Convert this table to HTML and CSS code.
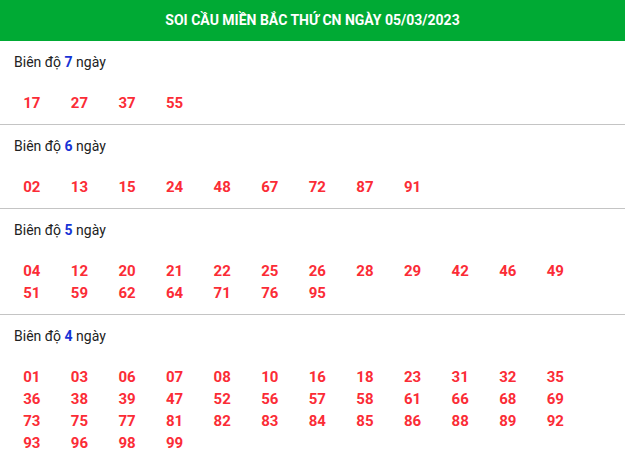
FILE: index.html
```html
<!DOCTYPE html>
<html lang="vi">
<head>
    <meta charset="UTF-8">
    <meta name="viewport" content="width=device-width, initial-scale=1.0">
    <title>Soi cầu miền Bắc</title>
    <link rel="stylesheet" href="styles.css">
</head>
<body>
    <div class="box">
        <h2 class="box-title">SOI CẦU MIỀN BẮC THỨ CN NGÀY 05/03/2023</h2>

        <div class="section">
            <div class="label">Biên độ <b>7</b> ngày</div>
            <div class="nums">
                <span>17</span><span>27</span><span>37</span><span>55</span>
            </div>
        </div>

        <div class="section">
            <div class="label">Biên độ <b>6</b> ngày</div>
            <div class="nums">
                <span>02</span><span>13</span><span>15</span><span>24</span><span>48</span><span>67</span>
                <span>72</span><span>87</span><span>91</span>
            </div>
        </div>

        <div class="section">
            <div class="label">Biên độ <b>5</b> ngày</div>
            <div class="nums">
                <span>04</span><span>12</span><span>20</span><span>21</span><span>22</span><span>25</span>
                <span>26</span><span>28</span><span>29</span><span>42</span><span>46</span><span>49</span>
                <span>51</span><span>59</span><span>62</span><span>64</span><span>71</span><span>76</span>
                <span>95</span>
            </div>
        </div>

        <div class="section">
            <div class="label">Biên độ <b>4</b> ngày</div>
            <div class="nums">
                <span>01</span><span>03</span><span>06</span><span>07</span><span>08</span><span>10</span>
                <span>16</span><span>18</span><span>23</span><span>31</span><span>32</span><span>35</span>
                <span>36</span><span>38</span><span>39</span><span>47</span><span>52</span><span>56</span>
                <span>57</span><span>58</span><span>61</span><span>66</span><span>68</span><span>69</span>
                <span>73</span><span>75</span><span>77</span><span>81</span><span>82</span><span>83</span>
                <span>84</span><span>85</span><span>86</span><span>88</span><span>89</span><span>92</span>
                <span>93</span><span>96</span><span>98</span><span>99</span>
            </div>
        </div>
    </div>
</body>
</html>
```

FILE: styles.css
```css
body {
    margin: 0;
    padding: 0;
    background: #fff;
    font-family: Roboto, 'Liberation Sans', sans-serif;
    color: #222;
}
.box-title {
    margin: 0;
    height: 41px;
    line-height: 41px;
    background: #00aa34;
    color: #fff;
    font-size: 14px;
    font-weight: bold;
    text-align: center;
}
.section {
    padding: 11px 0 10px;
    border-bottom: 1px solid #c4c4c4;
}
.section:last-child {
    border-bottom: none;
}
.label {
    padding-left: 14px;
    font-size: 14px;
    line-height: 20px;
    margin-bottom: 20px;
}
.label b {
    color: #1733d6;
}
.nums {
    display: grid;
    grid-template-columns: repeat(12, 47.6px);
    padding-left: 8px;
}
.nums span {
    text-align: center;
    color: #fb2c36;
    font-size: 15px;
    font-weight: bold;
    line-height: 22px;
}
```
